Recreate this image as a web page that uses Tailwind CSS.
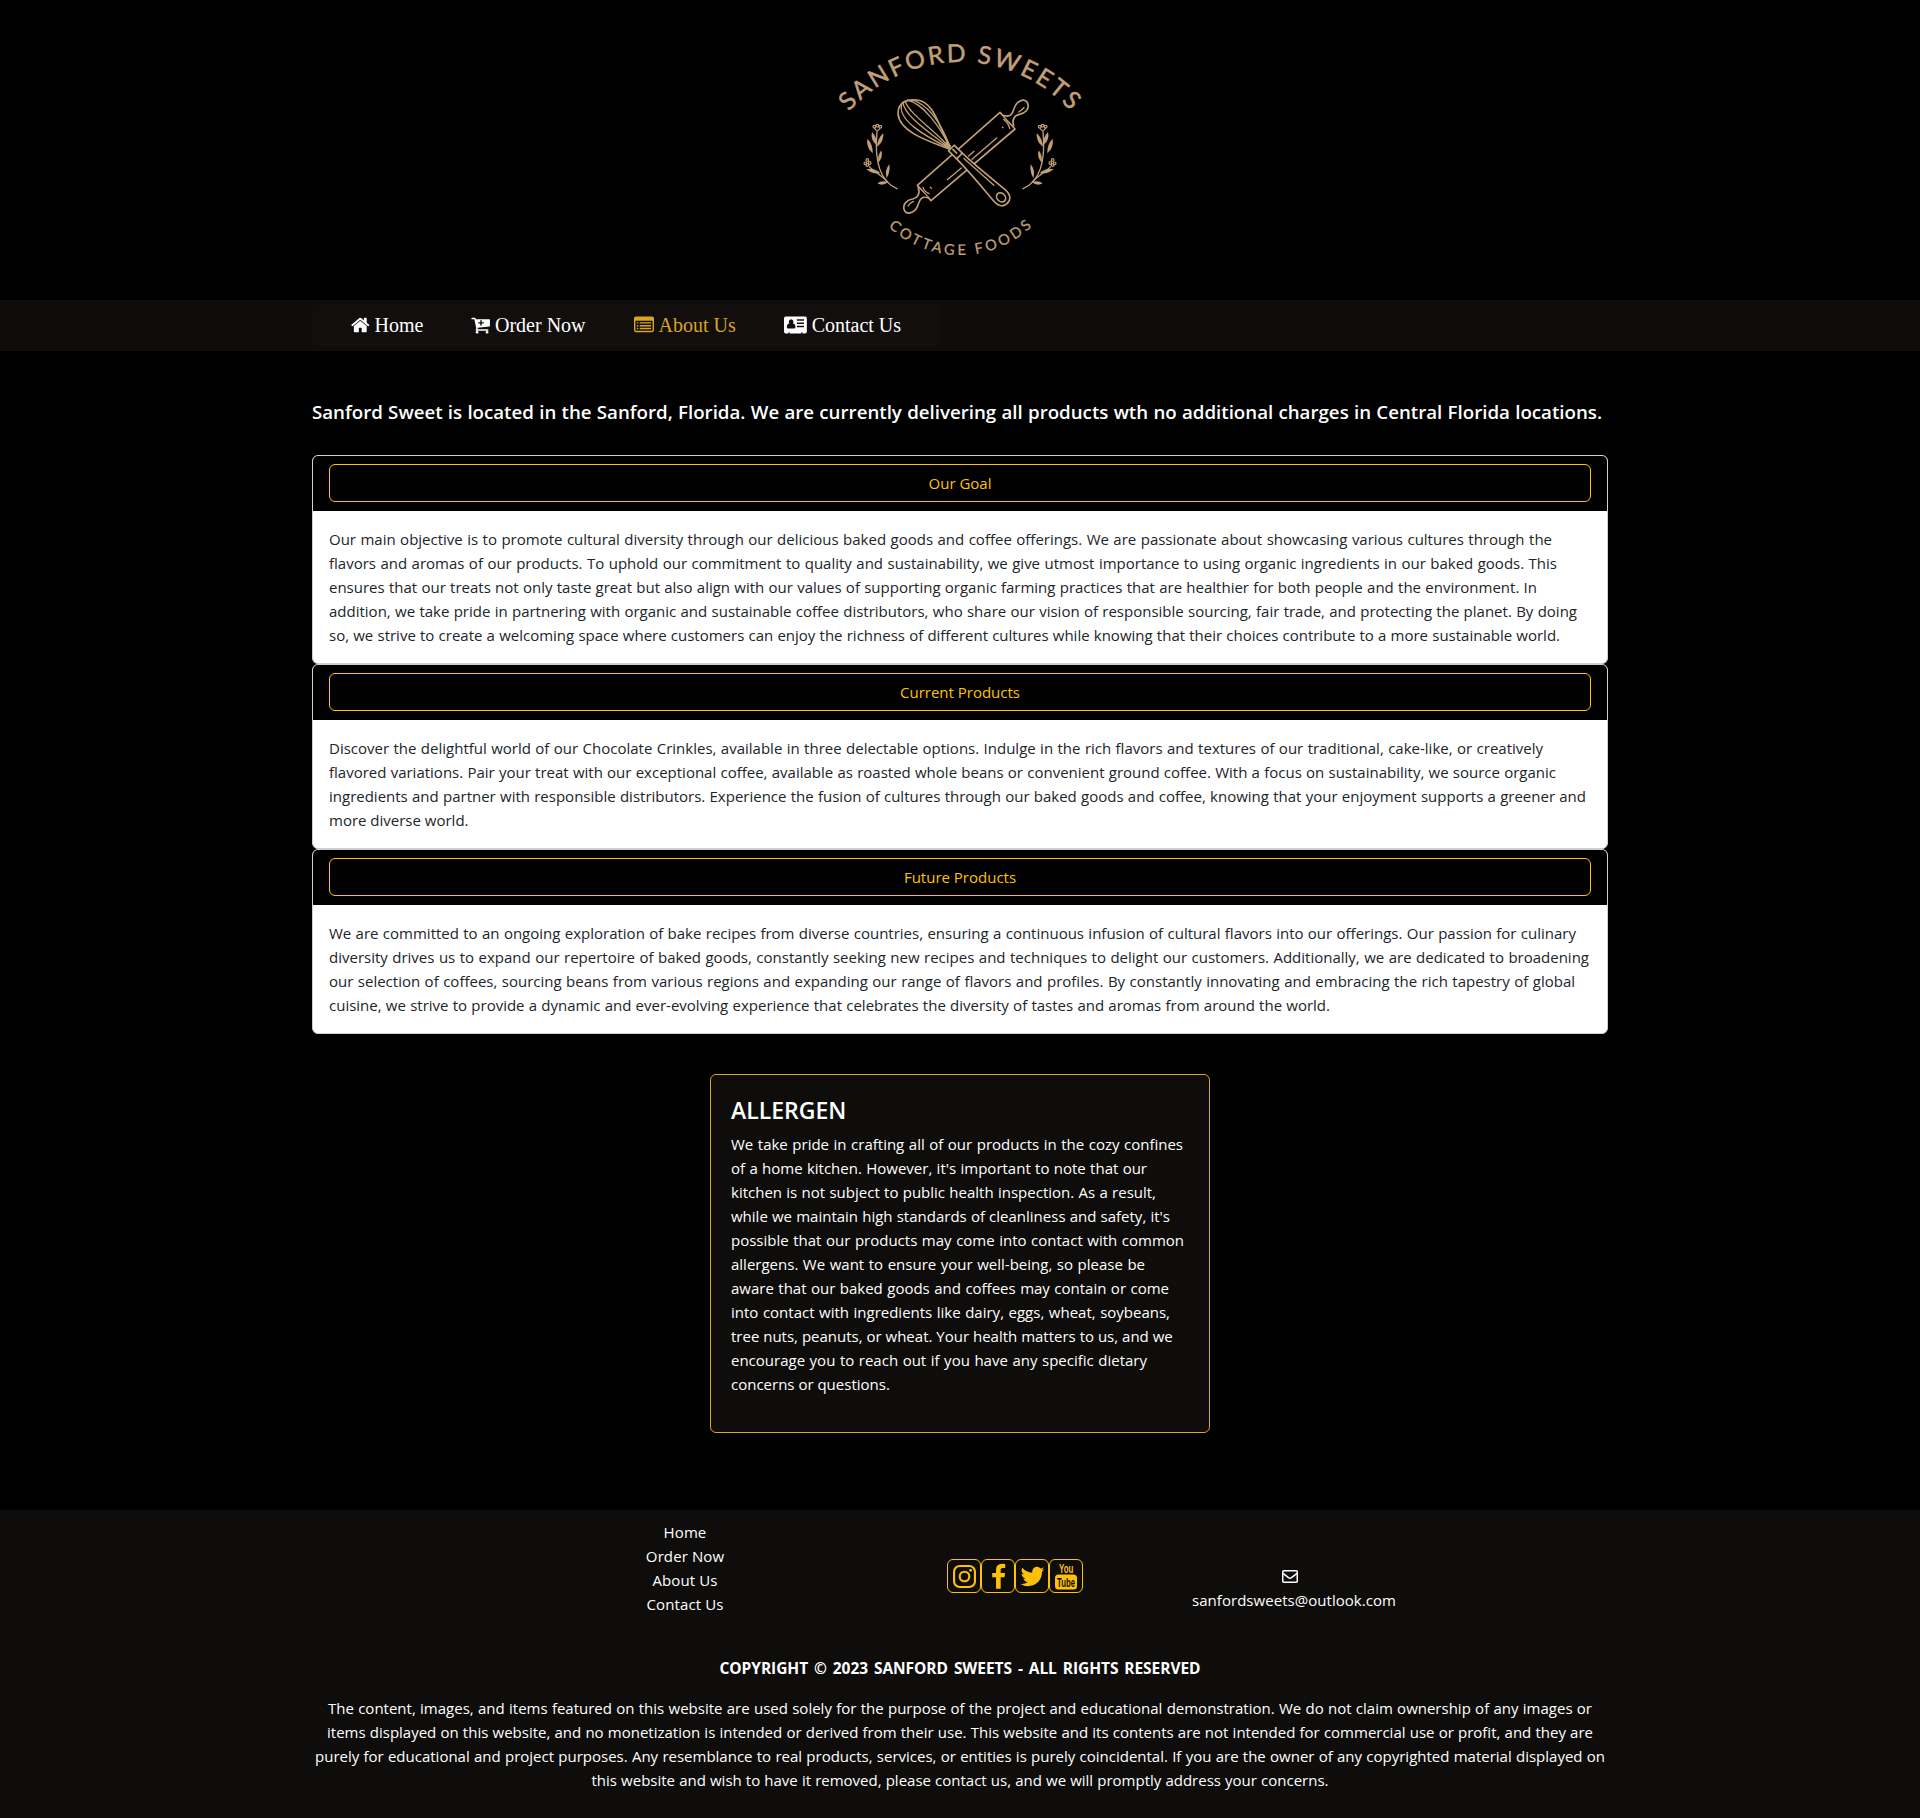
<!DOCTYPE html>
<html lang="en">
<head>
<meta charset="utf-8">
<title>Sanford Sweets - About Us</title>
<script src="https://cdn.jsdelivr.net/npm/@tailwindcss/browser@4"></script>
</head>
<body class="bg-black text-white font-['Open_Sans',sans-serif] text-[15px] leading-6">

<header class="h-[300px] pt-[30px]">
  <svg class="block mx-auto w-[280px] h-[240px]" viewBox="0 0 840 720" fill="none" stroke="#c19f77" stroke-width="5" stroke-linecap="round" stroke-linejoin="round">
    <defs>
      <path id="arcTop" d="M68 269 A444 444 0 0 1 772 269"/>
      <path id="arcBottom" d="M186 571 A315 315 0 0 0 654 571"/>
      <g id="pinHandle">
        <path d="M551 257 C572 262 577 252 582 236 C588 214 612 203 622 217 C632 238 612 251 598 253 C584 256 575 268 581 287" fill="#000"/>
        <path d="M596 246 Q608 240 612 232" stroke-width="4"/>
      </g>
      <g id="sprig">
        <path d="M231 476 C196 461 160 420 171 304" stroke-width="4"/>
        <path d="M203 455 C180 432 160 424 148 410" stroke-width="4"/>
        <g fill="#c19f77" stroke="none">
          <path d="M170 346 Q150 330 156 306 Q172 322 170 346Z"/>
          <path d="M171 350 Q192 336 190 309 Q172 326 171 350Z"/>
          <path d="M158 370 Q138 352 142 326 Q160 344 158 370Z"/>
          <path d="M175 398 Q190 382 184 361 Q172 376 175 398Z"/>
          <path d="M181 430 Q158 434 139 418 Q164 412 181 430Z"/>
          <path d="M200 445 Q212 424 208 403 Q193 420 200 445Z"/>
          <path d="M204 457 Q188 470 172 460 Q186 449 204 457Z"/>
        </g>
        <g stroke-width="3.500">
          <circle cx="172" cy="287" r="4"/><circle cx="163" cy="290" r="4"/><circle cx="181" cy="290" r="4"/><path d="M164 295 Q172 308 180 295"/>
          <circle cx="142" cy="390" r="4"/><circle cx="136" cy="400" r="4"/><circle cx="149" cy="399" r="4"/><circle cx="142" cy="405" r="4"/>
        </g>
      </g>
    </defs>

    <g fill="#c19f77" class="font-['Lato',sans-serif]">
      <text font-size="74" stroke-width="1.500" textLength="748" lengthAdjust="spacing"><textPath href="#arcTop" startOffset="31" textLength="748" lengthAdjust="spacing">SANFORD SWEETS</textPath></text>
      <text font-size="44" stroke-width=".8" textLength="474" lengthAdjust="spacing"><textPath href="#arcBottom" startOffset="27" textLength="474" lengthAdjust="spacing">COTTAGE FOODS</textPath></text>
    </g>

    <path d="M540 247 L585 297 L333 512 L292 466 Z"/>
    <use href="#pinHandle"/>
    <use href="#pinHandle" transform="rotate(180 438 380)"/>
    <path d="M551 268 Q565 278 569 295 M327 491 Q313 485 309 472 M530 324 L456 388 M462 364 L446 378 M382 449 L424 414 M547 291 L549 293 M331 472 L334 475" stroke-width="4"/>

    <path d="M386 356 C330 335 236 306 234 250 C234 215 262 207 292 210 C345 216 358 300 391 350" fill="#000"/>
    <path d="M386 354 C310 315 232 270 245 222 M387 353 C325 305 250 255 249 216 M388 352 C345 300 270 255 255 213 M389 351 C360 290 310 222 263 210 M390 350 C365 285 330 225 275 209" stroke-width="4"/>
    <path d="M372 348 L388 360 L392 348 L380 330Z" fill="#c19f77" stroke="none"/>

    <g transform="translate(397 357) rotate(44.500)">
      <path d="M-4 -12 H30 C90 -13 150 -20 195 -24 C226 -26 232 -12 232 0 C232 14 224 27 195 24 C150 20 90 13 30 12 H-4 Z" fill="#000"/>
      <path d="M30 -12 V12 M2 0 H18" />
      <path d="M45 -4 C90 -6 130 -8 165 -10" stroke-width="4"/>
      <ellipse cx="206" cy="1" rx="15" ry="12"/>
    </g>

    <use href="#sprig"/>
    <use href="#sprig" transform="translate(840 0) scale(-1 1)"/>
  </svg>
</header>

<nav class="bg-[#0e0d0b] h-[51px] pt-[5px] pl-[312px]">
  <ul class="flex items-center gap-[48px] w-[628px] h-[41px] pl-[39px] pb-px rounded bg-[#120e0d] font-['Liberation_Serif',serif] text-[20px] whitespace-nowrap">
    <li class="flex items-center gap-[5px]">
      <svg class="w-[18.570px] h-5" viewBox="64 0 1664 1792" fill="currentColor"><path d="M1472 992v480q0 26-19 45t-45 19h-384v-384h-256v384h-384q-26 0-45-19t-19-45v-480q0-1 .5-3t.5-3l575-474 575 474q1 2 1 6zm223-69l-62 74q-8 9-21 11h-3q-13 0-21-7l-692-577-692 577q-12 8-24 7-13-2-21-11l-62-74q-8-10-7-23.500t11-21.500l719-599q32-26 76-26t76 26l244 204v-195q0-14 9-23t23-9h192q14 0 23 9t9 23v408l219 182q10 8 11 21.500t-7 23.500z"/></svg>
      <span>Home</span>
    </li>
    <li class="flex items-center gap-[5px]">
      <svg class="w-[18.570px] h-5" viewBox="64 0 1664 1792" fill="currentColor"><path d="M1216 704q0-26-19-45t-45-19h-128v-128q0-26-19-45t-45-19-45 19-19 45v128h-128q-26 0-45 19t-19 45 19 45 45 19h128v128q0 26 19 45t45 19 45-19 19-45v-128h128q26 0 45-19t19-45zm-480 832q0 53-37.500 90.500t-90.500 37.500-90.500-37.500-37.500-90.500 37.500-90.500 90.500-37.500 90.500 37.500 37.500 90.500zm896 0q0 53-37.500 90.500t-90.500 37.500-90.500-37.500-37.500-90.500 37.500-90.500 90.500-37.500 90.500 37.500 37.500 90.500zm128-1088v512q0 24-16 42.500t-41 21.500l-1044 122q1 7 4.500 21.500t6 26.500 2.500 22q0 16-24 64h920q26 0 45 19t19 45-19 45-45 19h-1024q-26 0-45-19t-19-45q0-14 11-39.500t29.500-59.500 20.500-38l-177-823h-204q-26 0-45-19t-19-45 19-45 45-19h256q16 0 28.500 6.500t20 15.500 13 24.500 7.500 26.500 5.500 29.500 4.500 25.500h1201q26 0 45 19t19 45z"/></svg>
      <span>Order Now</span>
    </li>
    <li class="flex items-center gap-[5px] text-[#daa520]">
      <svg class="w-[20px] h-5" viewBox="0 0 1792 1792" fill="currentColor"><path fill-rule="evenodd" d="M160 128H1632Q1792 128 1792 288V1376Q1792 1536 1632 1536H160Q0 1536 0 1376V288Q0 128 160 128ZM128 512V1376Q128 1408 160 1408H1632Q1664 1408 1664 1376V512ZM256 640H384V768H256ZM512 640H1536V768H512ZM256 896H384V1024H256ZM512 896H1536V1024H512ZM256 1152H384V1280H256ZM512 1152H1536V1280H512Z"/></svg>
      <span>About Us</span>
    </li>
    <li class="flex items-center gap-[5px]">
      <svg class="w-[22.860px] h-5" viewBox="0 0 2048 1792" fill="currentColor"><path fill-rule="evenodd" d="M160 128H1888Q2048 128 2048 288V1504Q2048 1664 1888 1664H1664V1600Q1664 1536 1600 1536Q1536 1536 1536 1600V1664H512V1600Q512 1536 448 1536Q384 1536 384 1600V1664H160Q0 1664 0 1504V288Q0 128 160 128ZM640 384A210 230 0 0 0 480 760Q256 790 256 1100Q256 1216 370 1216H910Q1024 1216 1024 1100Q1024 790 800 760A210 230 0 0 0 640 384ZM1152 384H1792V512H1152ZM1152 672H1792V800H1152ZM1152 960H1792V1088H1152Z"/></svg>
      <span>Contact Us</span>
    </li>
  </ul>
</nav>

<main class="w-[1296px] mx-auto">
  <h1 class="pt-[49px] w-[1290px] text-[18.700px] font-semibold whitespace-nowrap text-justify [text-align-last:justify]">Sanford Sweet is located in the Sanford, Florida. We are currently delivering all products wth no additional charges in Central Florida locations.</h1>

  <div class="mt-[31px] text-[#212529]">
    <section class="border border-[#d0d0d0] rounded-md bg-white overflow-hidden">
      <div class="bg-black h-[55px] px-4 pt-2"><button class="block w-full h-[38px] border border-[#ffc107] rounded-md text-[#ffc107]">Our Goal</button></div>
      <p class="p-4 whitespace-nowrap text-justify [text-align-last:justify]">
        <span class="block w-[1223px]">Our main objective is to promote cultural diversity through our delicious baked goods and coffee offerings. We are passionate about showcasing various cultures through the</span>
        <span class="block w-[1228px]">flavors and aromas of our products. To uphold our commitment to quality and sustainability, we give utmost importance to using organic ingredients in our baked goods. This</span>
        <span class="block w-[1208px]">ensures that our treats not only taste great but also align with our values of supporting organic farming practices that are healthier for both people and the environment. In</span>
        <span class="block w-[1248px]">addition, we take pride in partnering with organic and sustainable coffee distributors, who share our vision of responsible sourcing, fair trade, and protecting the planet. By doing</span>
        <span class="block w-[1231px]">so, we strive to create a welcoming space where customers can enjoy the richness of different cultures while knowing that their choices contribute to a more sustainable world.</span>
      </p>
    </section>
    <section class="border border-[#d0d0d0] rounded-md bg-white overflow-hidden">
      <div class="bg-black h-[55px] px-4 pt-2"><button class="block w-full h-[38px] border border-[#ffc107] rounded-md text-[#ffc107]">Current Products</button></div>
      <p class="p-4 whitespace-nowrap text-justify [text-align-last:justify]">
        <span class="block w-[1214px]">Discover the delightful world of our Chocolate Crinkles, available in three delectable options. Indulge in the rich flavors and textures of our traditional, cake-like, or creatively</span>
        <span class="block w-[1227px]">flavored variations. Pair your treat with our exceptional coffee, available as roasted whole beans or convenient ground coffee. With a focus on sustainability, we source organic</span>
        <span class="block w-[1257px]">ingredients and partner with responsible distributors. Experience the fusion of cultures through our baked goods and coffee, knowing that your enjoyment supports a greener and</span>
        <span class="block w-[139px]">more diverse world.</span>
      </p>
    </section>
    <section class="border border-[#d0d0d0] rounded-md bg-white overflow-hidden">
      <div class="bg-black h-[55px] px-4 pt-2"><button class="block w-full h-[38px] border border-[#ffc107] rounded-md text-[#ffc107]">Future Products</button></div>
      <p class="p-4 whitespace-nowrap text-justify [text-align-last:justify]">
        <span class="block w-[1247px]">We are committed to an ongoing exploration of bake recipes from diverse countries, ensuring a continuous infusion of cultural flavors into our offerings. Our passion for culinary</span>
        <span class="block w-[1260px]">diversity drives us to expand our repertoire of baked goods, constantly seeking new recipes and techniques to delight our customers. Additionally, we are dedicated to broadening</span>
        <span class="block w-[1246px]">our selection of coffees, sourcing beans from various regions and expanding our range of flavors and profiles. By constantly innovating and embracing the rich tapestry of global</span>
        <span class="block w-[1001px]">cuisine, we strive to provide a dynamic and ever-evolving experience that celebrates the diversity of tastes and aromas from around the world.</span>
      </p>
    </section>
  </div>

  <aside class="mt-10 mx-auto w-[500px] h-[359px] px-5 pt-[21px] border border-[#daa520] rounded-md bg-[#0e0d0b] whitespace-nowrap text-justify [text-align-last:justify]">
    <h2 class="w-[114px] text-[23px] leading-[29px] font-semibold mb-[7px]">ALLERGEN</h2>
    <p>
      <span class="block w-[452px]">We take pride in crafting all of our products in the cozy confines</span>
      <span class="block w-[416px]">of a home kitchen. However, it's important to note that our</span>
      <span class="block w-[425px]">kitchen is not subject to public health inspection. As a result,</span>
      <span class="block w-[439px]">while we maintain high standards of cleanliness and safety, it's</span>
      <span class="block w-[453px]">possible that our products may come into contact with common</span>
      <span class="block w-[414px]">allergens. We want to ensure your well-being, so please be</span>
      <span class="block w-[438px]">aware that our baked goods and coffees may contain or come</span>
      <span class="block w-[439px]">into contact with ingredients like dairy, eggs, wheat, soybeans,</span>
      <span class="block w-[440px]">tree nuts, peanuts, or wheat. Your health matters to us, and we</span>
      <span class="block w-[416px]">encourage you to reach out if you have any specific dietary</span>
      <span class="block w-[158px]">concerns or questions.</span>
    </p>
  </aside>
</main>

<footer class="mt-[77px] bg-[#0e0d0b] h-[308px] pt-[10px] text-center whitespace-nowrap">
  <div class="flex h-[136px] pl-[635px]">
    <ul class="w-[100px] tracking-[0.1px]">
      <li>Home</li>
      <li>Order Now</li>
      <li>About Us</li>
      <li>Contact Us</li>
    </ul>
    <div class="ml-[212px] mt-[39px] flex h-[34px] text-[#ffc107]">
      <a class="flex items-center justify-center w-[34px] h-[34px] border border-current rounded-md">
        <svg class="w-[23px] h-[23px]" viewBox="0 0 24 24" fill="none" stroke="currentColor" stroke-width="2.200"><rect x="1.100" y="1.100" width="21.800" height="21.800" rx="5.800"/><circle cx="12" cy="12" r="5"/><circle cx="18.400" cy="5.600" r="1.450" fill="currentColor" stroke="none"/></svg>
      </a>
      <a class="flex items-center justify-center w-[34px] h-[34px] border border-current rounded-md">
        <svg class="w-[27px] h-[27px]" viewBox="0 -48 1792 1792" fill="currentColor"><path d="M1343 12v264h-157q-86 0-116 36t-30 108v189h293l-39 296h-254v759h-306v-759h-255v-296h255v-218q0-186 104-288.500t277-102.500q147 0 228 12z"/></svg>
      </a>
      <a class="flex items-center justify-center w-[34px] h-[34px] border border-current rounded-md">
        <svg class="w-[27px] h-[27px]" viewBox="0 0 1792 1792" fill="currentColor"><path d="M1684 408q-67 98-162 167 1 14 1 42 0 130-38 259.500t-115.500 248.500-184.500 210.500-258 146-323 54.500q-271 0-496-145 35 4 78 4 225 0 401-138-105-2-188-64.500t-114-159.500q33 5 61 5 43 0 85-11-112-23-185.500-111.500t-73.500-205.500v-4q68 38 146 41-66-44-105-115t-39-154q0-88 44-163 121 149 294.500 238.500t371.500 99.500q-8-38-8-74 0-134 94.500-228.500t228.500-94.500q140 0 236 102 109-21 205-78-37 115-142 178 93-10 186-50z"/></svg>
      </a>
      <a class="flex items-center justify-center w-[34px] h-[34px] border border-current rounded-md">
        <svg class="w-[22px] h-[28px] font-['Liberation_Sans_Narrow','Liberation_Sans',sans-serif] font-bold" viewBox="0 0 22 28" fill="currentColor">
          <text transform="translate(4 11) scale(.62 1)" font-size="13.500" textLength="23" lengthAdjust="spacingAndGlyphs">You</text>
          <rect x="0" y="12.500" width="22" height="15" rx="3.500"/>
          <text transform="translate(2 25) scale(.62 1)" font-size="13" textLength="29" lengthAdjust="spacingAndGlyphs" fill="#0e0d0b">Tube</text>
        </svg>
      </a>
    </div>
    <div class="ml-[109px] mt-[44px] w-[204px]">
      <div class="flex justify-center h-6 pt-[6px] pr-[8px]">
        <svg class="w-4 h-[13px]" viewBox="0 0 16 13" fill="none" stroke="currentColor" stroke-width="1.500"><rect x=".75" y=".75" width="14.500" height="11.500" rx="1"/><path d="M1 3.300 L6.500 7.700 Q8 8.800 9.500 7.700 L15 3.300"/></svg>
      </div>
      <div class="tracking-[0.040px]">sanfordsweets@outlook.com</div>
    </div>
  </div>
  <p class="w-[481px] mx-auto font-bold text-[15.500px] tracking-[-0.050px] text-justify [text-align-last:justify]">COPYRIGHT © 2023 SANFORD SWEETS - ALL RIGHTS RESERVED</p>
  <p class="mt-4 text-justify [text-align-last:justify]">
    <span class="block mx-auto w-[1264px]">The content, images, and items featured on this website are used solely for the purpose of the project and educational demonstration. We do not claim ownership of any images or</span>
    <span class="block mx-auto w-[1266px]">items displayed on this website, and no monetization is intended or derived from their use. This website and its contents are not intended for commercial use or profit, and they are</span>
    <span class="block mx-auto w-[1290px]">purely for educational and project purposes. Any resemblance to real products, services, or entities is purely coincidental. If you are the owner of any copyrighted material displayed on</span>
    <span class="block mx-auto w-[737px]">this website and wish to have it removed, please contact us, and we will promptly address your concerns.</span>
  </p>
</footer>
</body>
</html>
